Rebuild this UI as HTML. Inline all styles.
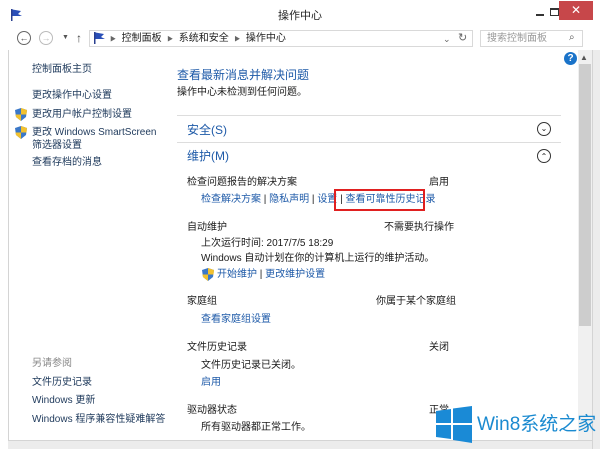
<!DOCTYPE html><html><head><meta charset="utf-8"><style>
*{margin:0;padding:0;box-sizing:border-box}
body{width:600px;height:449px;background:#ececec;position:relative;overflow:hidden;font-family:"Liberation Sans","Noto Sans CJK SC",sans-serif;font-size:10px;color:#1a1a1a}
.a{position:absolute;white-space:nowrap;line-height:14px}
.l{color:#1e5aa8}
.d{color:#1e395b}
.win{position:absolute;left:0;top:0;width:600px;height:449px;background:#fff}
</style></head><body>
<div class="win"></div>
<svg class="a" style="left:10px;top:8px" width="14" height="14"><rect x="1" y="1" width="1.5" height="12" fill="#2a3f8f"/><path d="M2.5 1.5 L11 3 L8 6 L12 8 L2.5 8Z" fill="#2a4fb8"/></svg>
<div class="a" style="left:278px;top:9px;font-size:11px;color:#222">操作中心</div>
<div class="a" style="left:536px;top:14px;width:8px;height:2px;background:#333"></div>
<div class="a" style="left:550px;top:8px;width:9px;height:8px;border:1px solid #333;border-top-width:2px"></div>
<div class="a" style="left:559px;top:1px;width:34px;height:19px;background:#c7474a;color:#fff;text-align:center;line-height:19px;font-size:12px">✕</div>
<div class="a" style="left:17px;top:31px;width:14px;height:14px;border:1px solid #666;border-radius:50%;font-size:9px;line-height:12px;text-align:center;color:#444">←</div>
<div class="a" style="left:39px;top:31px;width:14px;height:14px;border:1px solid #bbb;border-radius:50%;font-size:9px;line-height:12px;text-align:center;color:#bbb">→</div>
<div class="a" style="left:62px;top:31px;font-size:7px;color:#555">▼</div>
<div class="a" style="left:76px;top:31px;font-size:12px;color:#444">↑</div>
<div class="a" style="left:89px;top:30px;width:384px;height:17px;border:1px solid #d9d9d9"></div>
<svg class="a" style="left:93px;top:32px" width="14" height="13"><rect x="1" y="0" width="1.5" height="12" fill="#2a3f8f"/><path d="M2.5 0.5 L11 2 L8 5 L12 7 L2.5 7Z" fill="#2a4fb8"/></svg>
<div class="a" style="left:110px;top:32px;font-size:10px;color:#222"><span style="font-size:6px;color:#666">▶</span>&nbsp; 控制面板 &nbsp;<span style="font-size:6px;color:#666">▶</span>&nbsp; 系统和安全 &nbsp;<span style="font-size:6px;color:#666">▶</span>&nbsp; 操作中心</div>
<div class="a" style="left:443px;top:32px;font-size:9px;color:#666">⌄</div>
<div class="a" style="left:458px;top:31px;font-size:11px;color:#666">↻</div>
<div class="a" style="left:480px;top:30px;width:103px;height:17px;border:1px solid #d9d9d9"></div>
<div class="a" style="left:487px;top:32px;font-size:10px;color:#999">搜索控制面板</div>
<div class="a" style="left:569px;top:31px;font-size:10px;color:#555">⌕</div>
<div class="a" style="left:8px;top:50px;width:1px;height:391px;background:#d4d4d4"></div>
<div class="a" style="left:8px;top:440px;width:585px;height:9px;background:#ececec;border-top:1px solid #d4d4d4"></div>
<div class="a" style="left:592px;top:50px;width:8px;height:399px;background:#ececec;border-left:1px solid #d4d4d4"></div>
<div class="a" style="left:578px;top:50px;width:14px;height:390px;background:#f0f0f0"></div>
<div class="a" style="left:580px;top:51px;font-size:8px;color:#555">▲</div>
<div class="a" style="left:579px;top:64px;width:12px;height:262px;background:#cdcdcd"></div>
<div class="a" style="left:564px;top:52px;width:13px;height:13px;border-radius:50%;background:#1a73c9;color:#fff;font-weight:bold;font-size:10px;text-align:center;line-height:13px">?</div>
<div class="a d" style="left:32px;top:63px">控制面板主页</div>
<div class="a d" style="left:32px;top:89px">更改操作中心设置</div>
<svg class="a" style="left:15px;top:108px" width="12" height="13"><path d="M6 0 L12 2 L11 9 L6 13 L1 9 L0 2Z" fill="#3b78c8"/><path d="M6 0 L12 2 L11.5 6.5 L6 6.5Z M6 6.5 L0.5 6.5 L1 9 L6 13Z" fill="#f2c12e"/></svg>
<div class="a d" style="left:32px;top:108px">更改用户帐户控制设置</div>
<svg class="a" style="left:15px;top:126px" width="12" height="13"><path d="M6 0 L12 2 L11 9 L6 13 L1 9 L0 2Z" fill="#3b78c8"/><path d="M6 0 L12 2 L11.5 6.5 L6 6.5Z M6 6.5 L0.5 6.5 L1 9 L6 13Z" fill="#f2c12e"/></svg>
<div class="a d" style="left:32px;top:126px">更改 Windows SmartScreen</div>
<div class="a d" style="left:32px;top:139px">筛选器设置</div>
<div class="a d" style="left:32px;top:156px">查看存档的消息</div>
<div class="a" style="left:32px;top:357px;color:#888">另请参阅</div>
<div class="a d" style="left:32px;top:376px">文件历史记录</div>
<div class="a d" style="left:32px;top:394px">Windows 更新</div>
<div class="a d" style="left:32px;top:413px">Windows 程序兼容性疑难解答</div>
<div class="a" style="left:177px;top:66px;font-size:12px;line-height:18px;color:#1e5aa8">查看最新消息并解决问题</div>
<div class="a" style="left:177px;top:86px">操作中心未检测到任何问题。</div>
<div class="a" style="left:177px;top:115px;width:384px;height:1px;background:#ddd"></div>
<div class="a" style="left:187px;top:121px;font-size:12px;line-height:18px;color:#1e5aa8">安全(S)</div>
<div class="a" style="left:537px;top:122px;width:14px;height:14px;border:1px solid #333;border-radius:50%;font-size:8px;line-height:12px;text-align:center">⌄</div>
<div class="a" style="left:177px;top:142px;width:384px;height:1px;background:#ddd"></div>
<div class="a" style="left:187px;top:147px;font-size:12px;line-height:18px;color:#1e5aa8">维护(M)</div>
<div class="a" style="left:537px;top:149px;width:14px;height:14px;border:1px solid #333;border-radius:50%;font-size:8px;line-height:13px;text-align:center">⌃</div>
<div class="a" style="left:187px;top:176px">检查问题报告的解决方案</div>
<div class="a" style="left:429px;top:176px">启用</div>
<div class="a" style="left:201px;top:193px"><span class="l">检查解决方案</span> | <span class="l">隐私声明</span> | <span class="l">设置</span> | <span class="l">查看可靠性历史记录</span></div>
<div class="a" style="left:334px;top:189px;width:91px;height:22px;border:2px solid #e02020"></div>
<div class="a" style="left:187px;top:221px">自动维护</div>
<div class="a" style="left:384px;top:221px">不需要执行操作</div>
<div class="a" style="left:201px;top:237px">上次运行时间: 2017/7/5 18:29</div>
<div class="a" style="left:201px;top:252px">Windows 自动计划在你的计算机上运行的维护活动。</div>
<svg class="a" style="left:202px;top:268px" width="12" height="13"><path d="M6 0 L12 2 L11 9 L6 13 L1 9 L0 2Z" fill="#3b78c8"/><path d="M6 0 L12 2 L11.5 6.5 L6 6.5Z M6 6.5 L0.5 6.5 L1 9 L6 13Z" fill="#f2c12e"/></svg>
<div class="a" style="left:217px;top:268px"><span class="l">开始维护</span> | <span class="l">更改维护设置</span></div>
<div class="a" style="left:187px;top:295px">家庭组</div>
<div class="a" style="left:376px;top:295px">你属于某个家庭组</div>
<div class="a l" style="left:201px;top:313px">查看家庭组设置</div>
<div class="a" style="left:187px;top:341px">文件历史记录</div>
<div class="a" style="left:429px;top:341px">关闭</div>
<div class="a" style="left:201px;top:359px">文件历史记录已关闭。</div>
<div class="a l" style="left:201px;top:376px">启用</div>
<div class="a" style="left:187px;top:404px">驱动器状态</div>
<div class="a" style="left:429px;top:404px">正常</div>
<div class="a" style="left:201px;top:421px">所有驱动器都正常工作。</div>
<svg class="a" style="left:436px;top:406px" width="36" height="37"><path d="M0 5 L15 3 L15 17 L0 17Z M17 2.5 L36 0 L36 17 L17 17Z M0 19 L15 19 L15 33 L0 31Z M17 19 L36 19 L36 37 L17 34Z" fill="#1a8ad6"/></svg>
<div class="a" style="left:477px;top:413px;font-size:19px;line-height:24px;color:#1a8ad0">Win8系统之家</div>
</body></html>
